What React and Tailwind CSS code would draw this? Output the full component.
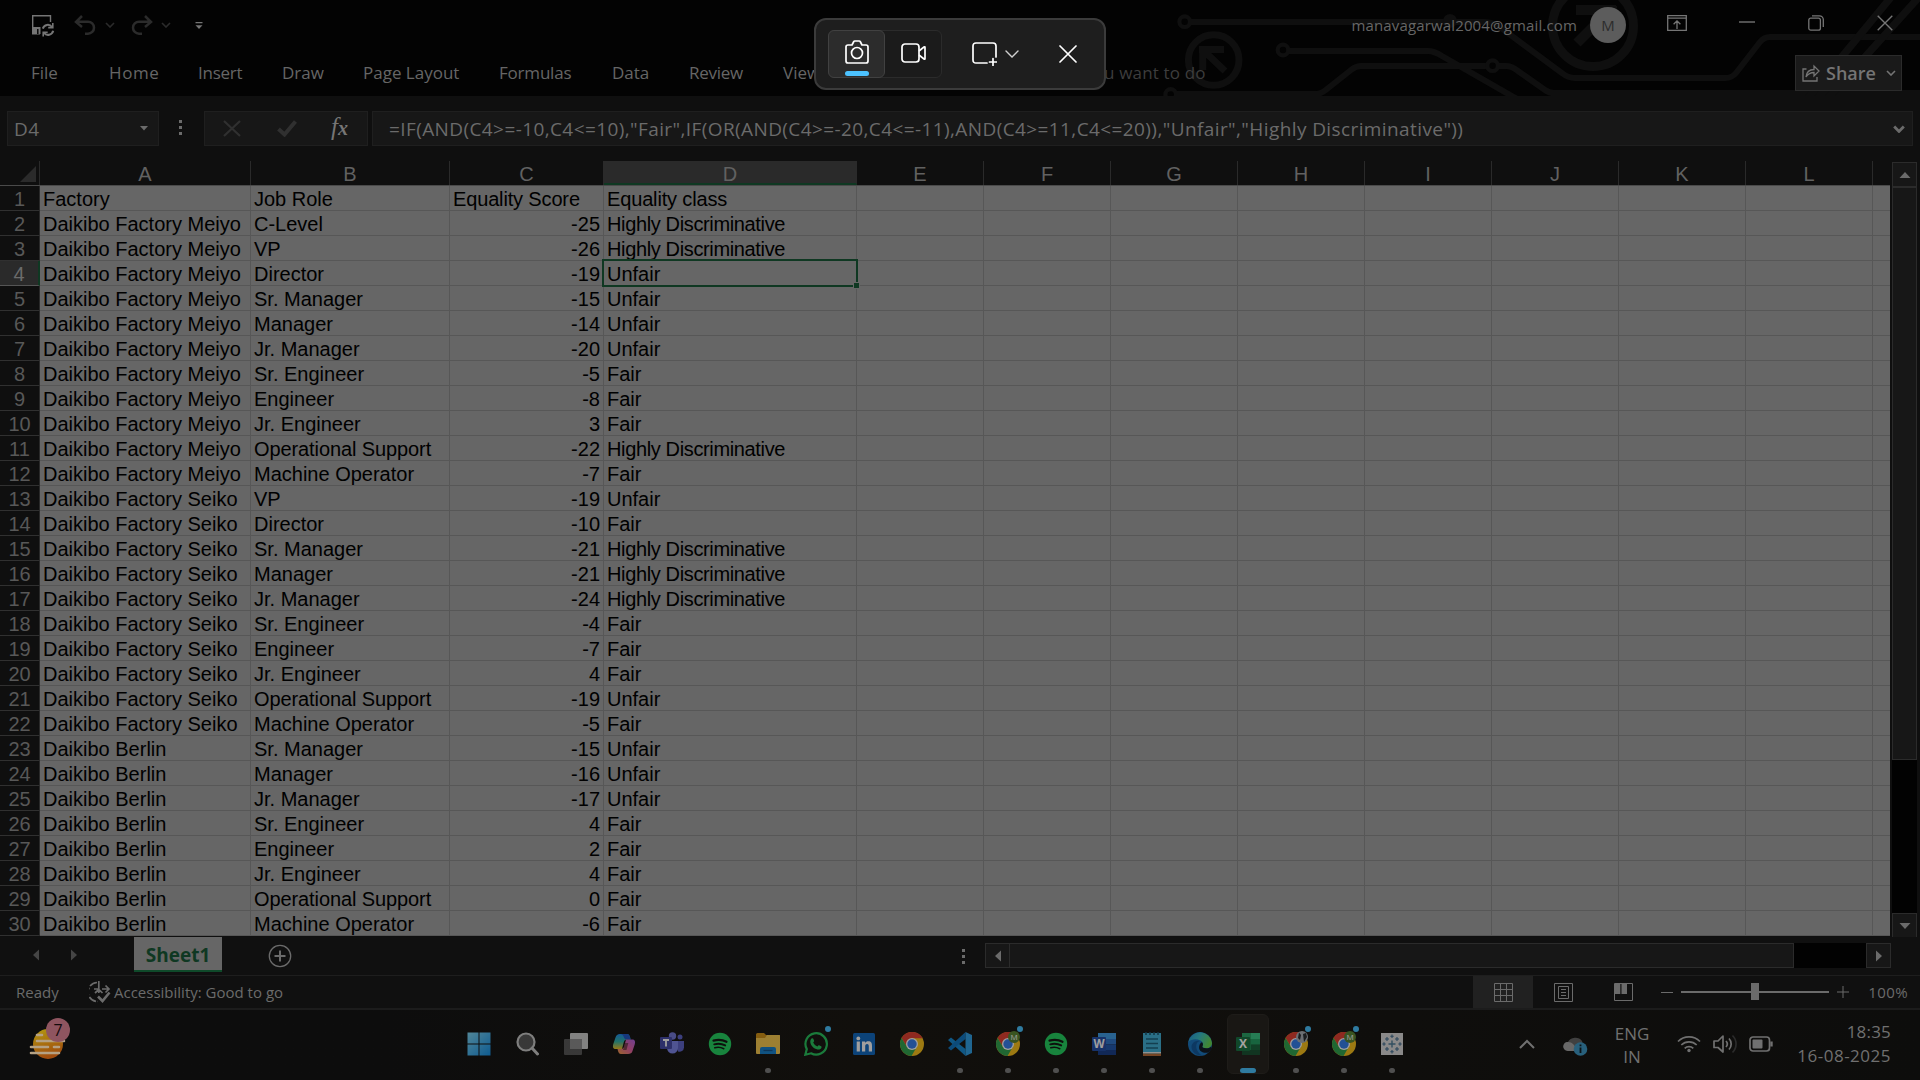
import React from 'react';

const M = 'Daikibo Factory Meiyo';
const S = 'Daikibo Factory Seiko';
const B = 'Daikibo Berlin';
const HD = 'Highly Discriminative';

const ROWS = [
  ['Factory', 'Job Role', 'Equality Score', 'Equality class'],
  [M, 'C-Level', -25, HD],
  [M, 'VP', -26, HD],
  [M, 'Director', -19, 'Unfair'],
  [M, 'Sr. Manager', -15, 'Unfair'],
  [M, 'Manager', -14, 'Unfair'],
  [M, 'Jr. Manager', -20, 'Unfair'],
  [M, 'Sr. Engineer', -5, 'Fair'],
  [M, 'Engineer', -8, 'Fair'],
  [M, 'Jr. Engineer', 3, 'Fair'],
  [M, 'Operational Support', -22, HD],
  [M, 'Machine Operator', -7, 'Fair'],
  [S, 'VP', -19, 'Unfair'],
  [S, 'Director', -10, 'Fair'],
  [S, 'Sr. Manager', -21, HD],
  [S, 'Manager', -21, HD],
  [S, 'Jr. Manager', -24, HD],
  [S, 'Sr. Engineer', -4, 'Fair'],
  [S, 'Engineer', -7, 'Fair'],
  [S, 'Jr. Engineer', 4, 'Fair'],
  [S, 'Operational Support', -19, 'Unfair'],
  [S, 'Machine Operator', -5, 'Fair'],
  [B, 'Sr. Manager', -15, 'Unfair'],
  [B, 'Manager', -16, 'Unfair'],
  [B, 'Jr. Manager', -17, 'Unfair'],
  [B, 'Sr. Engineer', 4, 'Fair'],
  [B, 'Engineer', 2, 'Fair'],
  [B, 'Jr. Engineer', 4, 'Fair'],
  [B, 'Operational Support', 0, 'Fair'],
  [B, 'Machine Operator', -6, 'Fair'],
];

const COLS = ['A', 'B', 'C', 'D', 'E', 'F', 'G', 'H', 'I', 'J', 'K', 'L', ''];
const GRID = 'grid grid-cols-[40px_211px_199px_154px_253px_repeat(8,127px)_17px]';

const TABS = [
  ['File', 'w-[78px]', ''],
  ['Home', 'w-[89px]', 'tracking-[0.6px]'],
  ['Insert', 'w-[84px]', 'tracking-[-0.25px]'],
  ['Draw', 'w-[81px]', ''],
  ['Page Layout', 'w-[136px]', ''],
  ['Formulas', 'w-[113px]', 'tracking-[-0.2px]'],
  ['Data', 'w-[77px]', ''],
  ['Review', 'w-[94px]', 'tracking-[-0.25px]'],
  ['View', 'w-[321px]', ''],
];

function Chevron({ className = '', w = 1.6 }) {
  return (
    <svg viewBox="0 0 10 6" className={className} fill="none" stroke="currentColor" strokeWidth={w}>
      <path d="M1 1l4 4 4-4" />
    </svg>
  );
}

function Circuit() {
  return (
    <svg
      viewBox="1100 0 820 96"
      className="absolute right-0 top-0 h-24 w-[820px]"
      fill="none"
      stroke="#0f0f0f"
      strokeWidth="6"
    >
      <circle cx="1184.7" cy="21.7" r="5.3" strokeWidth="4.2" />
      <path d="M1191 22H1484Q1494 22 1501 28L1562 73Q1568 78 1575 78H1725Q1732 78 1736 73L1760 42Q1764 37 1770 37H1920" />
      <circle cx="1450" cy="21" r="7" fill="#0f0f0f" stroke="none" />
      <circle cx="1283" cy="50" r="5.3" strokeWidth="4.2" />
      <path d="M1289 51H1428Q1434 51 1442 56L1517 99" />
      <circle cx="1170.7" cy="94.5" r="5.3" strokeWidth="4.2" />
      <path d="M1177 94H1316Q1321 94 1327 89L1351 70Q1356 66 1361 66H1486" />
      <circle cx="1492.6" cy="65.7" r="5.3" strokeWidth="4.2" />
      <path d="M1499 66H1506Q1512 66 1518 71L1545 90Q1549 93 1554 93H1920" />
      <circle cx="1213.7" cy="60" r="25.3" strokeWidth="7" />
      <path d="M1199 49.5H1224M1202.7 46V70M1203 50L1225 71" strokeWidth="7" />
      <circle cx="1593" cy="26" r="40.5" strokeWidth="9" />
      <path d="M1576 10H1616M1577 43L1610 10M1612 6V40" strokeWidth="10" />
      <path d="M1892 -4L1808 98M1920 -4L1828 98" strokeWidth="7.5" />
    </svg>
  );
}

function TitleBar() {
  return (
    <div className="relative flex h-12 items-start text-[#757575]">
      <svg viewBox="0 0 24 24" className="ml-[31px] mt-[14px] h-6 w-6" fill="none" stroke="currentColor" strokeWidth="1.4">
        <path d="M9 19.8H1.7V1.7H19.5V8" />
        <path d="M2 13h7.5v7H2z" fill="currentColor" stroke="none" />
        <path d="M6.8 15v5" stroke="#030303" />
        <path d="M11.8 14.600a5.200 5.200 0 0 1 9.200-1.600M22.200 16.800a5.200 5.200 0 0 1-9.200 2" strokeWidth="2" />
        <path d="M21.800 9v4.600h-4.600M12.200 22.500v-4.300h4.500" strokeWidth="1.600" />
      </svg>
      <svg viewBox="0 0 22 20" className="ml-[19px] mt-[15px] h-5 w-[22px] text-[#2b2b2b]" fill="none" stroke="currentColor" strokeWidth="2.5">
        <path d="M8 1L2 7l6 5M2 6.7h12a6 6 0 0 1 0 12h-3" />
      </svg>
      <Chevron className="ml-[9px] mt-[22px] h-[6px] w-[10px] text-[#2b2b2b]" />
      <svg viewBox="0 0 22 20" className="ml-4 mt-[15px] h-5 w-[22px] text-[#2b2b2b]" fill="none" stroke="currentColor" strokeWidth="2.5">
        <path d="M14 1l6 6-6 5M20 6.7H8a6 6 0 0 0 0 12h3" />
      </svg>
      <Chevron className="ml-2 mt-[22px] h-[6px] w-[10px] text-[#2b2b2b]" />
      <svg viewBox="0 0 8 8" className="ml-[24px] mt-[22px] h-2 w-2">
        <path d="M0.5 0h7v1.3h-7zM0.5 3.2h7L4 7z" fill="currentColor" />
      </svg>
      <div className="ml-auto flex items-start">
        <span className="mt-[14px] text-[15px] leading-[22px] tracking-[0.15px] text-[#666]">manavagarwal2004@gmail.com</span>
        <span className="ml-[13px] mt-[7px] flex h-9 w-9 items-center justify-center rounded-full bg-[#5c5c5c] text-[15px] text-[#2c2c2c]">
          M
        </span>
        <svg viewBox="0 0 20 16" className="ml-[41px] mt-[15px] h-4 w-5" fill="none" stroke="currentColor" strokeWidth="1.3">
          <path d="M.7.7h18.6v14.6H.7zM.7 3.2h18.6M10 14V6M6.6 9.2L10 5.8l3.4 3.4" />
        </svg>
        <svg viewBox="0 0 16 2" className="ml-[52px] mt-[21px] h-[2px] w-4">
          <path d="M0 .3h16v1.4H0z" fill="currentColor" />
        </svg>
        <svg viewBox="0 0 16 16" className="ml-[53px] mt-[15px] h-4 w-4" fill="none" stroke="currentColor" strokeWidth="1.3">
          <rect x=".8" y="3.2" width="11.6" height="12" rx="2" />
          <path d="M4 .8h7.5a3.8 3.8 0 0 1 3.8 3.8V12" />
        </svg>
        <svg viewBox="0 0 16 16" className="ml-[53px] mr-[27px] mt-[15px] h-4 w-4" fill="none" stroke="currentColor" strokeWidth="1.4">
          <path d="M.7.7l14.6 14.6M15.3.7L.7 15.3" />
        </svg>
      </div>
    </div>
  );
}

function RibbonTabs() {
  return (
    <div className="relative flex h-12 items-center pl-[31px] text-[17px] text-[#666]">
      {TABS.map(([t, w, tr]) => (
        <span key={t} className={`${w} ${tr} shrink-0 whitespace-nowrap pt-[2px]`}>
          {t}
        </span>
      ))}
      <span className="pt-[2px] tracking-[0.17px] text-[#3d3d3d]">u want to do</span>
      <div className="mr-[18px] ml-auto mt-[2px] flex h-9 w-[107px] items-center border border-[#2b2b2b] bg-[#1a1a1a] pl-[6px] text-[#747474]">
        <svg viewBox="0 0 18 18" className="h-[18px] w-[18px] shrink-0" fill="none" stroke="currentColor" strokeWidth="1.3">
          <path d="M4.5 5H1v12h14v-4" />
          <path d="M4 13c.5-5 3.500-7.500 8-7.500V2l5 5-5 5V8.500C8.500 8.500 6 10 4 13z" />
        </svg>
        <span className="ml-[6px] text-[18px] font-semibold">Share</span>
        <Chevron className="ml-[10px] h-[6px] w-[10px]" />
      </div>
    </div>
  );
}

function FormulaBar() {
  return (
    <div className="flex h-[65px] items-start bg-[#0f0f0f] pl-[7px] pt-[15px] text-[19px] text-[#6b6b6b]">
      <div className="flex h-[35px] w-[152px] items-center border border-[#1f1f1f] bg-[#171717] pl-[6px]">
        <span className="pt-px tracking-[0.5px]">D4</span>
        <svg viewBox="0 0 8 5" className="ml-auto mr-[10px] h-[5px] w-2">
          <path d="M0 0h8L4 4.600z" fill="currentColor" />
        </svg>
      </div>
      <div className="ml-[20px] mt-[9px] flex flex-col gap-[3px]">
        <i className="h-[3px] w-[3px] bg-[#6b6b6b]" />
        <i className="h-[3px] w-[3px] bg-[#6b6b6b]" />
        <i className="h-[3px] w-[3px] bg-[#6b6b6b]" />
      </div>
      <div className="ml-[22px] flex h-[35px] w-[164px] items-center border border-[#1f1f1f] bg-[#171717]">
        <svg viewBox="0 0 18 17" className="ml-[18px] h-[17px] w-[18px] text-[#303030]" fill="none" stroke="currentColor" strokeWidth="2.200">
          <path d="M1 1l16 15M17 1L1 16" />
        </svg>
        <svg viewBox="0 0 20 17" className="ml-[36px] h-[17px] w-5 text-[#303030]" fill="none" stroke="currentColor" strokeWidth="4">
          <path d="M1.500 9l6 5.500L18.500 1.500" />
        </svg>
        <span className="ml-[34px] -mt-1 font-['Liberation_Serif'] text-[25px] italic leading-none text-[#757575]">
          f<span className="text-[20px] font-bold">x</span>
        </span>
      </div>
      <div className="ml-1 flex h-[35px] w-[1541px] items-center border border-[#1f1f1f] bg-[#171717] pl-[16px]">
        <span className="whitespace-nowrap pt-[2px] tracking-[0.4px]">
          {'=IF(AND(C4>=-10,C4<=10),"Fair",IF(OR(AND(C4>=-20,C4<=-11),AND(C4>=11,C4<=20)),"Unfair","Highly Discriminative"))'}
        </span>
        <Chevron w={2.4} className="ml-auto mr-[7px] h-[8px] w-3" />
      </div>
    </div>
  );
}

function Sheet() {
  return (
    <div className="w-[1890px] font-['Liberation_Sans'] text-[20px] leading-[26px]">
      <div className={`${GRID} h-[25px] border-b border-[#4a4a4a] bg-[#0f0f0f] text-center text-[#616161]`}>
        <div className="flex items-end justify-end border-r border-[#2a2a2a] pb-[3px] pr-[3px]">
          <svg viewBox="0 0 16 16" className="h-4 w-4">
            <path d="M16 0v16H0z" fill="#2b2b2b" />
          </svg>
        </div>
        {COLS.map((c, i) => (
          <div
            key={i}
            className={
              c === 'D'
                ? 'h-[24px] border-r border-b-2 border-r-[#2a2a2a] border-b-[#0f3822] bg-[#2a2a2a]'
                : c
                  ? 'h-[24px] border-r border-[#2a2a2a]'
                  : ''
            }
          >
            {c}
          </div>
        ))}
      </div>
      {ROWS.map((r, n) => (
        <div key={n} className={`${GRID} h-[25px] grid-rows-[25px] bg-[#666] text-black`}>
          <div
            className={
              n === 3
                ? 'border-r-2 border-b border-r-[#0f3822] border-b-[#555] bg-[#2a2a2a] text-center text-[#6b6b6b]'
                : 'border-r border-b border-r-[#2a2a2a] border-b-[#303030] bg-[#0f0f0f] text-center text-[#585858]'
            }
          >
            {n + 1}
          </div>
          {COLS.map((c, i) => (
            <div
              key={i}
              className={`relative whitespace-pre border-b border-[#575757] pl-[3px] pr-[3px] ${c ? 'border-r' : ''} ${
                i === 2 && n > 0 ? 'text-right' : ''
              } ${r[i] === HD ? 'tracking-[-0.36px]' : ''} ${n === 0 && i > 1 ? 'tracking-[-0.15px]' : ''} ${
                r[i] === 'Operational Support' ? 'tracking-[-0.1px]' : ''
              }`}
            >
              {r[i]}
              {n === 3 && c === 'D' && (
                <span className="absolute -left-[2px] -top-[2px] z-10 h-[28px] w-[256px] border-2 border-[#0f3822]">
                  <i className="absolute -bottom-[4px] -right-[4px] h-[7px] w-[7px] border border-[#666] bg-[#0f3822]" />
                </span>
              )}
            </div>
          ))}
        </div>
      ))}
    </div>
  );
}

function Arrow({ d, className = '' }) {
  return (
    <svg viewBox="0 0 12 12" className={`h-3 w-3 ${className}`}>
      <path d={d} fill="currentColor" />
    </svg>
  );
}
const UP = 'M0.500 9h11L6 3z';
const DOWN = 'M0.500 3h11L6 9z';
const LEFT = 'M9 0.500v11L3 6z';
const RIGHT = 'M3 0.500v11L9 6z';
const BTN = 'flex h-[25px] w-[25px] shrink-0 items-center justify-center border border-[#2b2b2b] bg-[#171717]';

function SheetTabs() {
  return (
    <div className="flex h-[39px] items-start border-b border-[#1e1e1e] bg-[#101010] text-[#6b6b6b]">
      <Arrow d={LEFT} className="ml-[30px] mt-[12px] text-[#454545]" />
      <Arrow d={RIGHT} className="ml-[26px] mt-[12px] text-[#454545]" />
      <div className="ml-[54px] flex h-[35px] w-[88px] items-center justify-center border-b-2 border-[#0f4a2a] bg-[#666] pt-[4px] text-[19px] font-bold text-[#0f3822]">
        Sheet1
      </div>
      <svg viewBox="0 0 24 24" className="ml-[46px] mt-[7px] h-6 w-6" fill="none" stroke="currentColor" strokeWidth="1.300">
        <circle cx="12" cy="12" r="10.700" />
        <path d="M12 6.500v11M6.500 12h11" strokeWidth="2" />
      </svg>
      <div className="ml-[670px] mt-[12px] flex flex-col gap-[3px]">
        <i className="h-[3px] w-[3px] bg-[#6b6b6b]" />
        <i className="h-[3px] w-[3px] bg-[#6b6b6b]" />
        <i className="h-[3px] w-[3px] bg-[#6b6b6b]" />
      </div>
      <div className="ml-[20px] mt-[6px] flex h-[25px] w-[906px] bg-[#020202]">
        <div className={BTN}>
          <Arrow d={LEFT} />
        </div>
        <div className="h-[25px] w-[784px] border border-l-0 border-[#2b2b2b] bg-[#171717]" />
        <div className={`${BTN} ml-auto`}>
          <Arrow d={RIGHT} />
        </div>
      </div>
    </div>
  );
}

function StatusBar() {
  return (
    <div className="flex h-[34px] items-center border-b-2 border-[#1c1c1c] bg-[#101010] text-[15px] text-[#6b6b6b]">
      <span className="ml-4 w-[73px]">Ready</span>
      <svg viewBox="0 0 22 22" className="h-[22px] w-[22px]" fill="none" stroke="currentColor" strokeWidth="1.700">
        <path d="M8 1.500A9.500 9.500 0 0 0 9 20.500" strokeDasharray="8 1.800" />
        <path d="M9.800 0v12M5 8h5M6 12l3.800-3.500 3.700 3.500M13 8h7M16.500 4.500L20 8l-3.500 3.500" />
        <path d="M9 15.500l4.500 4.500 7-8.500" strokeWidth="2.600" />
      </svg>
      <span className="ml-[3px]">Accessibility: Good to go</span>
      <div className="ml-auto flex h-full w-[60px] items-center justify-center bg-[#212121]">
        <svg viewBox="0 0 19 19" className="h-[19px] w-[19px]" fill="none" stroke="currentColor">
          <path d="M.5.5h18v18H.5zM6.500.5v18M12.500.5v18M.5 6.500h18M.5 12.500h18" />
        </svg>
      </div>
      <div className="flex w-[60px] justify-center">
        <svg viewBox="0 0 19 19" className="h-[19px] w-[19px]" fill="none" stroke="currentColor">
          <path d="M.5.5h18v18H.5zM4.500 3.500h10v12h-10zM7 6.500h5M7 9.500h5M7 12.500h5" />
        </svg>
      </div>
      <div className="flex w-[60px] justify-center">
        <svg viewBox="0 0 19 18" className="-mt-px h-[18px] w-[19px]" fill="none" stroke="currentColor">
          <path d="M.5.5h18v17H.5z" />
          <path d="M1 1h5.300v10H1zM7.500 1h5.500v10H7.500z" fill="currentColor" stroke="none" />
        </svg>
      </div>
      <i className="ml-[8px] h-px w-3 bg-[#6b6b6b]" />
      <div className="relative ml-2 h-[2px] w-[148px] bg-[#6b6b6b]">
        <i className="absolute -top-[8px] left-[70px] h-[17px] w-2 bg-[#6b6b6b]" />
      </div>
      <svg viewBox="0 0 12 12" className="ml-2 h-3 w-3" stroke="currentColor">
        <path d="M6 0v12M0 6h12" />
      </svg>
      <span className="ml-[19px] mr-[12px] tracking-[0.4px]">100%</span>
    </div>
  );
}

function Chrome() {
  return (
    <svg viewBox="0 0 24 24" className="h-6 w-6">
      <circle cx="12" cy="12" r="12" fill="#fbc116" />
      <path d="M12 6.300h10.600A12 12 0 0 0 1.600 6l5.500 9z" fill="#e33b2e" />
      <path d="M1.600 6A12 12 0 0 0 11.500 24l5.400-9.200L7 15z" fill="#2ba24c" />
      <circle cx="12" cy="12" r="6" fill="#fff" />
      <circle cx="12" cy="12" r="4.700" fill="#2f7cf0" />
    </svg>
  );
}
function ChromeM({ photo }) {
  return (
    <span className="relative">
      <Chrome />
      {photo ? (
        <svg viewBox="0 0 12 12" className="absolute -top-px left-3 h-3 w-3">
          <circle cx="6" cy="6" r="6" fill="#a8b0b8" />
          <path d="M3 1.500L5 4l-1 5-2-2zM7 3l3-1 1 4-3 5z" fill="#22272c" />
        </svg>
      ) : (
        <span className="absolute -top-px left-3 flex h-3 w-3 items-center justify-center rounded-full bg-[#55832f] text-[8px] leading-none text-white">
          M
        </span>
      )}
    </span>
  );
}
function Spotify() {
  return (
    <svg viewBox="0 0 24 24" className="h-6 w-6" fill="none" stroke="#0c120e" strokeLinecap="round">
      <circle cx="12" cy="12" r="11.200" fill="#1ed35e" stroke="none" />
      <path d="M5.500 8.600c4.500-1.300 9.200-.9 13 1.200" strokeWidth="2.200" />
      <path d="M6.200 12.300c4-1.100 7.700-.7 11 1.100" strokeWidth="1.900" />
      <path d="M6.800 15.700c3.300-.9 6.200-.5 9 1" strokeWidth="1.600" />
    </svg>
  );
}

const ICONS = {
  win: (
    <svg viewBox="0 0 24 24" className="-ml-[3px] h-6 w-6">
      <defs>
        <linearGradient id="win" x1="0" y1="0" x2="1" y2="1">
          <stop offset="0" stopColor="#7fd8f7" />
          <stop offset="1" stopColor="#0f8fe8" />
        </linearGradient>
      </defs>
      <path d="M.5.5h11v11H.5zM12.500.5h11v11h-11zM.5 12.500h11v11H.5zM12.500 12.500h11v11h-11z" fill="url(#win)" />
    </svg>
  ),
  search: (
    <svg viewBox="0 0 24 24" className="h-6 w-6" fill="none" stroke="#c9c9c9">
      <circle cx="10" cy="10" r="8.500" strokeWidth="2.200" fill="#555" />
      <path d="M16.200 16.200l5.300 5.800" strokeWidth="3" strokeLinecap="round" />
    </svg>
  ),
  task: (
    <svg viewBox="0 0 24 24" className="h-6 w-6">
      <rect x="0" y="7" width="18" height="16" rx="1" fill="#555" />
      <rect x="6" y="1" width="18" height="16" rx="1" fill="#cfcfcf" />
      <path d="M6 7h12v10H6z" fill="#8c8c8c" />
    </svg>
  ),
  copilot: (
    <svg viewBox="0 0 24 24" className="h-6 w-6">
      <defs>
        <linearGradient id="cpa" x1="0" y1="0" x2="0" y2="1">
          <stop offset="0" stopColor="#1a8cf0" />
          <stop offset=".5" stopColor="#2fb5a8" />
          <stop offset="1" stopColor="#f0c020" />
        </linearGradient>
        <linearGradient id="cpb" x1="1" y1="0" x2="0" y2="1">
          <stop offset="0" stopColor="#b060e8" />
          <stop offset=".5" stopColor="#e860a0" />
          <stop offset="1" stopColor="#f8a040" />
        </linearGradient>
      </defs>
      <path d="M8 2h7c2 0 2.500 1.500 3 3l.6 2.500H15c-2 0-2.800 1-3.300 3L10 17H4c-3 0-3.500-2-2.700-5L3.500 5.500C4.200 3.200 5.500 2 8 2z" fill="url(#cpa)" />
      <path d="M8 2h7c2 0 2.500 1.500 3 3l.6 2.500H15c-2 0-2.800-1-3.200-2.500C11 2.800 10 2 8 2z" fill="#1c55c8" />
      <path d="M16 22H9c-2 0-2.500-1.500-3-3l-.5-2H9c2 0 2.800-1 3.300-3L14 7.500h6c3 0 3.500 2 2.700 5l-2.200 6.500c-.7 2.200-2 3-4.500 3z" fill="url(#cpb)" />
      <path d="M13 11l-2 7h3.500l1.800-7z" fill="#3a2020" opacity=".6" />
    </svg>
  ),
  teams: (
    <svg viewBox="0 0 24 24" className="h-6 w-6">
      <circle cx="12.500" cy="4" r="3.700" fill="#7076d8" />
      <circle cx="20" cy="5" r="2.500" fill="#5a60c8" />
      <path d="M15 9h9v6.500a4.500 4.500 0 0 1-6 4z" fill="#5a60c8" />
      <path d="M7 9h11v7a5.500 5.500 0 0 1-11 0z" fill="#7b83eb" />
      <rect x="0" y="5" width="12" height="12" rx="1" fill="#4248a8" />
      <path d="M3 8h6M6 8v6.500" stroke="#fff" strokeWidth="1.800" />
    </svg>
  ),
  spotify: <Spotify />,
  folder: (
    <svg viewBox="0 0 24 24" className="h-6 w-6">
      <path d="M0 2.500Q0 1 1.500 1H8l2 2h14v6H0z" fill="#d39212" />
      <path d="M0 6h9l2-3h12q1 0 1 1v17q0 1-1 1H1q-1 0-1-1z" fill="#fccb4c" />
      <path d="M4 22v-5q0-2 2-2h12q2 0 2 2v5z" fill="#1180d0" />
      <path d="M7.500 18.500h9" stroke="#0b4f8c" strokeWidth="1.300" />
    </svg>
  ),
  whatsapp: (
    <svg viewBox="0 0 24 24" className="h-6 w-6">
      <path d="M1.300 22.700l1.500-5.600A10.700 10.700 0 1 1 7 21.300z" fill="none" stroke="#22c35b" strokeWidth="2.200" />
      <path d="M8 6.300c.6-.3 1.100-.1 1.300.4l.8 2c.1.400 0 .8-.9 1.700.9 1.900 2.300 3.200 4.200 4 .9-1.100 1.200-1.400 1.700-1.200l2 1c.5.2.6.5.4 1.200-.5 1.600-2.300 2.500-4 2.100-4-.9-6.700-3.800-7.200-7.300-.2-1.700.6-3.300 1.700-3.900z" fill="#22c35b" />
    </svg>
  ),
  linkedin: (
    <svg viewBox="0 0 24 24" className="h-6 w-6">
      <rect x="1" y="1" width="22" height="22" rx="1.500" fill="#0a66c2" />
      <circle cx="6.300" cy="6.400" r="1.900" fill="#fff" />
      <path d="M4.700 9.500h3.200v10H4.700zM10 9.500h3.100v1.400c.6-1 1.700-1.600 3.200-1.600 3 0 3.700 1.900 3.700 4.600v5.600h-3.200v-5c0-1.300-.2-2.500-1.700-2.500s-1.900 1.200-1.900 2.500v5H10z" fill="#fff" />
    </svg>
  ),
  chrome: <Chrome />,
  vscode: (
    <svg viewBox="0 0 24 24" className="h-6 w-6">
      <path d="M3 5.500L0 8l17.500 16v-7z" fill="#1088d4" />
      <path d="M3 18.500L0 16 17.500 0v7z" fill="#0a74c4" />
      <path d="M17.500 0L24 3v18l-6.500 3z" fill="#2aa0ea" />
    </svg>
  ),
  chromeM: <ChromeM />,
  chromeP: <ChromeM photo />,
  word: (
    <svg viewBox="0 0 24 24" className="h-6 w-6">
      <path d="M6 1h18v6H6z" fill="#3a9be8" />
      <path d="M6 7h18v5.500H6z" fill="#2a72cc" />
      <path d="M6 12.500h18V18H6z" fill="#1b55b0" />
      <path d="M6 18h18v5H6z" fill="#123a88" />
      <rect x="0" y="5" width="14" height="14" rx="1" fill="#1c4aa8" />
      <text x="7" y="16" fontSize="11.500" fontWeight="700" textAnchor="middle" fill="#fff">W</text>
    </svg>
  ),
  notepad: (
    <svg viewBox="0 0 24 24" className="h-6 w-6">
      <rect x="3" y="1" width="18" height="21" fill="#3cb0d8" />
      <path d="M3 20h18v1.500H3z" fill="#e8e8e8" />
      <path d="M3 21.500h18V24H3z" fill="#b86a35" />
      <path d="M6 7h12M6 11.500h12M6 16h12" stroke="#17607e" strokeWidth="1.500" />
      <path d="M6 0v3M10 0v3M14 0v3M18 0v3" stroke="#14506a" strokeWidth="1.500" />
    </svg>
  ),
  edge: (
    <svg viewBox="0 0 24 24" className="h-6 w-6">
      <defs>
        <linearGradient id="eg" x1="0" y1="0" x2="1" y2=".4">
          <stop offset="0" stopColor="#1f90d8" />
          <stop offset=".5" stopColor="#35c0c8" />
          <stop offset="1" stopColor="#62d850" />
        </linearGradient>
      </defs>
      <circle cx="12" cy="12" r="12" fill="#1473c0" />
      <path d="M.3 10A12 12 0 0 1 24 11c0 3.500-2.800 5.300-5.800 5.300-2.600 0-4.400-1-3.700-2.300.9-1.500.7-4-2-5.500C8.500 6.500 3 7 .3 10z" fill="url(#eg)" />
      <path d="M14.500 14c-.7 1.300 1.100 2.300 3.700 2.300 2 0 3.600-.6 4.700-1.600L24 17l-3.500 3.500c-6 1.500-11-2-9-7.500.5-1.500 1.500-2.500 2.500-2.800 1.300 1.300 1.200 2.800.5 3.800z" fill="#0b1420" />
      <path d="M9 11c-2 4 0 9.500 5.500 12.700-6.500 0-11-4-11-9C3.500 11 8 7.500 12 9c-1 .3-2.400 1-3 2z" fill="#0c559c" />
    </svg>
  ),
  excel: (
    <svg viewBox="0 0 24 24" className="h-6 w-6">
      <path d="M6 1h18v22H6z" fill="#15824a" />
      <path d="M15 1h9v6h-9z" fill="#30c080" />
      <path d="M6 1h9v6H6z" fill="#1f9c60" />
      <path d="M15 7h9v5.500h-9z" fill="#189a5c" />
      <path d="M15 12.500h9V18h-9z" fill="#0e5c34" />
      <path d="M6 18h18v5H6z" fill="#0c4a2a" />
      <rect x="0" y="5" width="14" height="14" rx="1" fill="#0d6a3a" />
      <text x="7" y="16" fontSize="12" fontWeight="700" textAnchor="middle" fill="#fff">X</text>
    </svg>
  ),
  tableau: (
    <svg viewBox="0 0 24 24" className="h-6 w-6" stroke="#3d6a90" strokeWidth="1.100">
      <rect x="1" y="1" width="22" height="22" fill="#dcdcdc" stroke="none" />
      <path d="M12 8.500v7M8.500 12h7" stroke="#4a7a98" strokeWidth="1.400" />
      <path d="M12 2.500v3.400M10.300 4.200h3.400M12 18v3.400M10.300 19.700h3.400M4 10.300v3.400M2.300 12h3.400M20 10.300v3.400M18.300 12h3.400M7 5v4M5 7h4M17 5v4M15 7h4M7 15v4M5 17h4M17 15v4M15 17h4" />
    </svg>
  ),
};

// icon key, window running, notification dot
const TASKS = [
  ['win'], ['search'], ['task'], ['copilot'], ['teams'], ['spotify'],
  ['folder', 1], ['whatsapp', 0, 1], ['linkedin'], ['chrome'], ['vscode', 1],
  ['chromeM', 1, 1], ['spotify', 1], ['word', 1], ['notepad', 1], ['edge', 1],
  ['excel', 2], ['chromeP', 1, 1], ['chromeM', 1, 1], ['tableau', 1],
];

function Taskbar() {
  return (
    <div className="flex h-[70px] items-start bg-linear-to-r from-[#0d0d0d] from-20% via-[#110f0c] via-45% to-[#0d0d0c] text-[17px] text-[#707070]">
      <div className="relative ml-[28px] mt-[10px] h-[46px] w-[44px]">
        <svg viewBox="0 0 44 46" className="h-[46px] w-[44px]" strokeLinecap="round">
          <defs>
            <linearGradient id="sun" x1="0" y1="0" x2=".3" y2="1">
              <stop offset="0" stopColor="#b39a10" />
              <stop offset="1" stopColor="#a04c0e" />
            </linearGradient>
          </defs>
          <circle cx="20" cy="24" r="15" fill="url(#sun)" />
          <path d="M9 15h5M9 21h27M3 27h17M26 27h5M3 33h28" stroke="#b5a184" strokeWidth="2.600" />
        </svg>
        <span className="absolute -top-[2px] left-[18px] flex h-6 w-6 items-center justify-center rounded-full bg-[#8f5560] text-[16px] text-[#140a0c]">
          7
        </span>
      </div>
      <div className="ml-[384px] flex">
        {TASKS.map(([k, run, dot], i) => (
          <div key={i} className="relative flex h-[70px] w-[48px] items-start justify-center">
            {run === 2 && <i className="absolute left-[3px] top-1 h-[60px] w-[42px] rounded-md border border-[#1e1c19] bg-[#191714]" />}
            <span className="relative mt-[22px] opacity-60">{ICONS[k]}</span>
            {dot ? <i className="absolute left-[33px] top-[16px] h-[6px] w-[6px] rounded-full bg-[#2f7ba0]" /> : null}
            {run === 1 && <i className="absolute left-[21px] top-[58px] h-[5px] w-[6px] rounded-full bg-[#4f4f4f]" />}
            {run === 2 && <i className="absolute left-4 top-[58px] h-[5px] w-4 rounded-full bg-[#2f7ba0]" />}
          </div>
        ))}
      </div>
      <div className="ml-auto flex h-[70px] items-start">
        <svg viewBox="0 0 16 10" className="mt-[29px] h-[10px] w-4" fill="none" stroke="currentColor" strokeWidth="2">
          <path d="M1 9l7-7 7 7" />
        </svg>
        <svg viewBox="0 0 25 22" className="ml-[28px] mt-[24px] h-[22px] w-[25px]">
          <path d="M4 16a4 4 0 0 1 1-8 8 7 0 0 1 14-1l2 8z" fill="#404040" />
          <path d="M4.500 17a4.500 4.500 0 0 1 .5-9c4 0 7 3 9 9z" fill="#686868" />
          <circle cx="17.500" cy="15" r="6.800" fill="#28607c" />
          <path d="M17.500 13.500v5.500M17.500 10.500v1.700" stroke="#0c1418" strokeWidth="1.800" />
        </svg>
        <div className="ml-[25px] mt-[12px] w-[38px] text-center leading-[23px]">
          <div>ENG</div>
          <div>IN</div>
        </div>
        <svg viewBox="0 0 24 18" className="ml-[26px] mt-[25px] h-[18px] w-6" fill="none" stroke="currentColor" strokeWidth="1.700">
          <path d="M1 6.500a15.500 15.500 0 0 1 22 0M4.300 10a11 11 0 0 1 15.400 0M7.700 13.300a6.200 6.200 0 0 1 8.600 0" />
          <circle cx="12" cy="15.500" r="1.700" fill="currentColor" stroke="none" />
        </svg>
        <svg viewBox="0 0 24 20" className="ml-3 mt-[24px] h-5 w-6" fill="none" stroke="currentColor" strokeWidth="1.700">
          <path d="M1 7v6.500h4l5 4.500V2L5 7z" strokeLinejoin="round" />
          <path d="M13 7a4.500 4.500 0 0 1 0 6M16 4.500a8 8 0 0 1 0 11" />
          <path d="M19.500 1.500a12 12 0 0 1 0 17" stroke="#2b2b2b" />
        </svg>
        <svg viewBox="0 0 24 16" className="ml-3 mt-[26px] h-4 w-6" fill="none" stroke="currentColor" strokeWidth="1.700">
          <rect x="1" y="1" width="19.500" height="14" rx="3" />
          <rect x="3.500" y="3.500" width="10" height="9" rx="1" fill="currentColor" stroke="none" />
          <path d="M22.500 5.500v5" strokeWidth="2.400" />
        </svg>
        <div className="mr-[29px] w-[118px] pt-[10px] text-right leading-[24px]">
          <div className="tracking-[0.2px]">18:35</div>
          <div className="tracking-[0.5px]">16-08-2025</div>
        </div>
      </div>
    </div>
  );
}

function SnipToolbar() {
  return (
    <div className="absolute left-[814px] top-[18px] z-20 flex h-[72px] w-[292px] items-center rounded-xl border-2 border-[#3b3b3b] bg-[#1e1e1e] pl-3 text-white">
      <div className="-mt-px flex h-12 w-[114px] rounded-md border border-[#2b2b2b] bg-[#1b1b1b]">
        <div className="-m-px flex h-12 w-[57px] flex-col items-center rounded-md border border-[#414141] bg-[#2c2c2c] pt-[9px]">
          <svg viewBox="0 0 24 24" className="h-6 w-6 shrink-0" fill="none" stroke="currentColor" strokeWidth="1.700" strokeLinejoin="round">
            <path d="M3 5h4l1.800-3.500q.3-.5 1-.5h4.400q.7 0 1 .5L17 5h4q2 0 2 2v14q0 2-2 2H3q-2 0-2-2V7q0-2 2-2z" />
            <circle cx="12" cy="13" r="5.500" />
          </svg>
          <i className="mt-[7px] h-[5px] w-6 shrink-0 rounded-full bg-[#4cc2ff]" />
        </div>
        <svg viewBox="0 0 25 20" className="ml-[17px] mt-[12px] h-5 w-[25px]" fill="none" stroke="currentColor" strokeWidth="1.700" strokeLinejoin="round">
          <rect x="1" y="1" width="17" height="18" rx="3" />
          <path d="M18 8l5-4q1-.7 1 .5v11q0 1.200-1 .5l-5-4" />
        </svg>
      </div>
      <svg viewBox="0 0 25 24" className="ml-[30px] h-6 w-[25px]" fill="none" stroke="currentColor" strokeWidth="1.700" strokeLinecap="round">
        <path d="M15 21H4q-3 0-3-3V4q0-3 3-3h17q3 0 3 3v11M21 16.500v7M17.500 20h7" />
      </svg>
      <svg viewBox="0 0 14 8" className="ml-2 h-2 w-[14px] text-[#d0d0d0]" fill="none" stroke="currentColor" strokeWidth="1.400" strokeLinecap="round">
        <path d="M1 1l6 6 6-6" />
      </svg>
      <svg viewBox="0 0 18 18" className="ml-[40px] h-[18px] w-[18px]" fill="none" stroke="currentColor" strokeWidth="1.700" strokeLinecap="round">
        <path d="M1 1l16 16M17 1L1 17" />
      </svg>
    </div>
  );
}

export default function App() {
  return (
    <div className="relative flex h-[1080px] w-[1920px] flex-col overflow-hidden bg-[#0f0f0f] font-['Open_Sans',sans-serif]">
      <div className="relative bg-[#030303]">
        <Circuit />
        <TitleBar />
        <RibbonTabs />
      </div>
      <FormulaBar />
      <div className="flex h-[776px]">
        <Sheet />
        <div className="ml-[2px] mt-px flex h-[776px] w-[25px] flex-col bg-[#020202] text-[#6b6b6b]">
          <div className={BTN}>
            <Arrow d={UP} />
          </div>
          <div className="h-[573px] border border-[#2b2b2b] bg-[#171717]" />
          <div className={`${BTN} mt-auto`}>
            <Arrow d={DOWN} />
          </div>
        </div>
      </div>
      <SheetTabs />
      <StatusBar />
      <Taskbar />
      <SnipToolbar />
      <div className="absolute left-[873px] top-0 z-30 h-[20px] w-[176px] overflow-hidden text-center text-[15px] text-[#8a8a8a]">
        <div className="mt-[14px] whitespace-nowrap leading-[22px] tracking-[0.5px]">Equality Table - Excel</div>
      </div>
    </div>
  );
}
